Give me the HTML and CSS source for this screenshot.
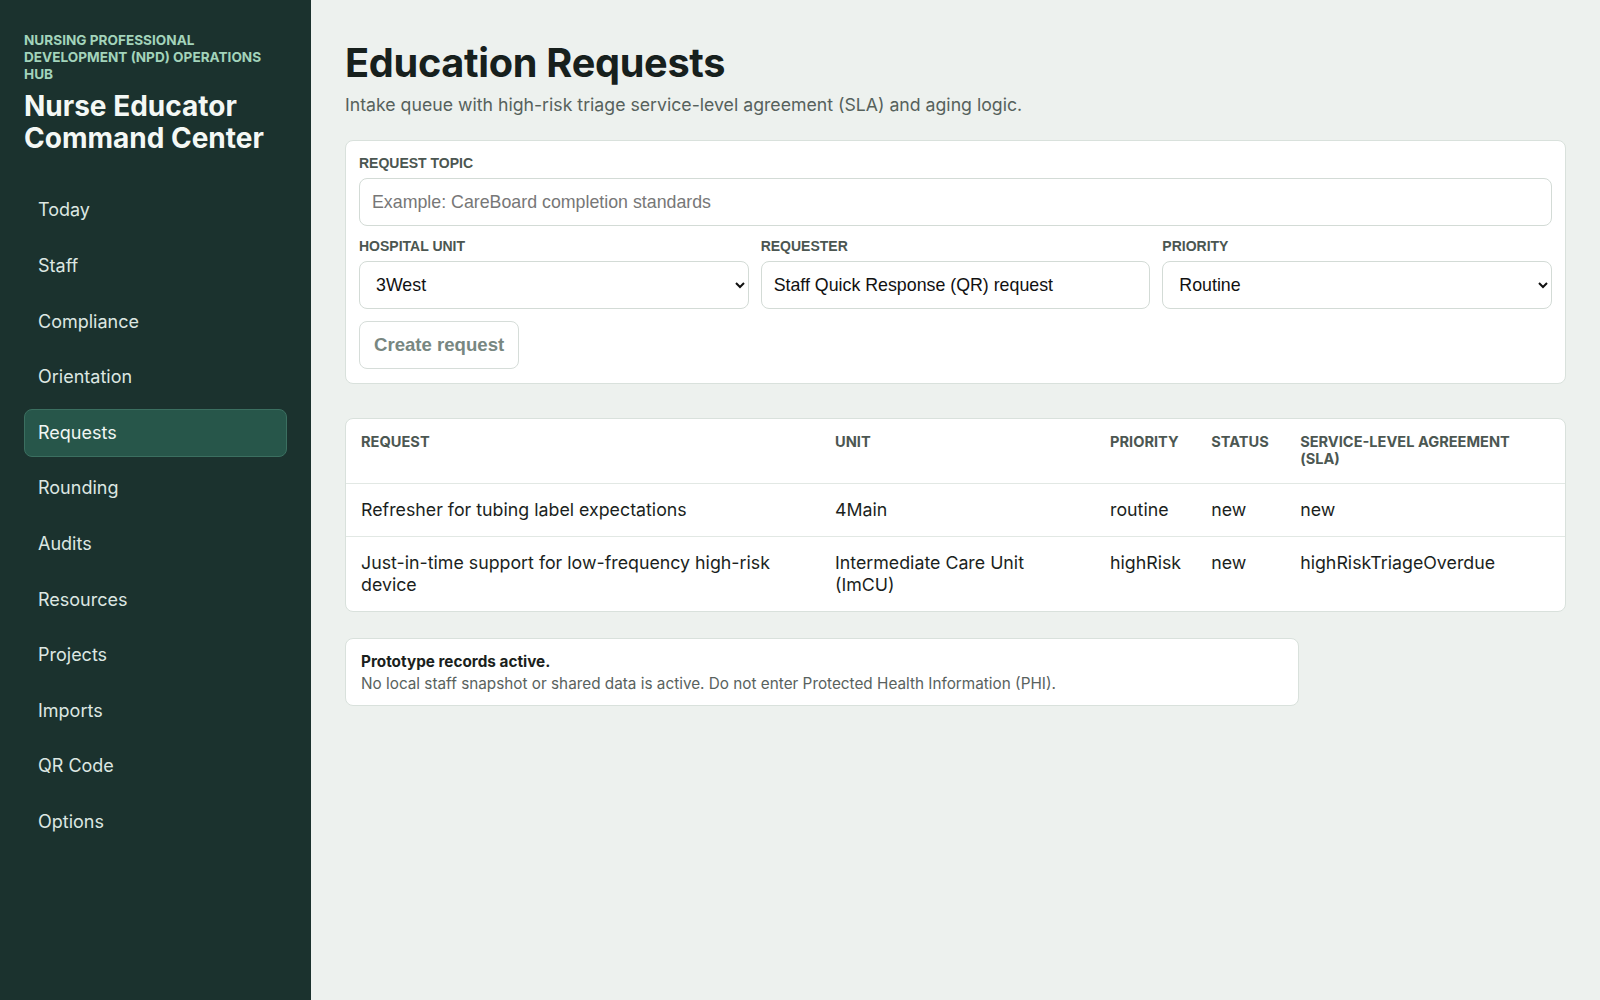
FILE: index.html
```html
<!DOCTYPE html>
<html lang="en">
<head>
<meta charset="UTF-8">
<meta name="viewport" content="width=device-width, initial-scale=1.0">
<title>Education Requests</title>
<link rel="stylesheet" href="styles.css">
</head>
<body>
<div class="app">
  <aside class="sidebar">
    <div class="eyebrow">Nursing Professional Development (NPD) Operations Hub</div>
    <div class="brand">Nurse Educator Command Center</div>
    <nav class="nav">
      <a href="#">Today</a>
      <a href="#">Staff</a>
      <a href="#">Compliance</a>
      <a href="#">Orientation</a>
      <a href="#" class="active">Requests</a>
      <a href="#">Rounding</a>
      <a href="#">Audits</a>
      <a href="#">Resources</a>
      <a href="#">Projects</a>
      <a href="#">Imports</a>
      <a href="#">QR Code</a>
      <a href="#">Options</a>
    </nav>
  </aside>

  <main class="main">
    <h1>Education Requests</h1>
    <p class="lead">Intake queue with high-risk triage service-level agreement (SLA) and aging logic.</p>

    <section class="card form-card">
      <div class="field">
        <label for="topic">Request topic</label>
        <input type="text" id="topic" placeholder="Example: CareBoard completion standards">
      </div>
      <div class="form-row">
        <div class="field">
          <label for="unit">Hospital unit</label>
          <select id="unit">
            <option>3West</option>
            <option>4Main</option>
            <option>Intermediate Care Unit (ImCU)</option>
          </select>
        </div>
        <div class="field">
          <label for="requester">Requester</label>
          <input type="text" id="requester" value="Staff Quick Response (QR) request">
        </div>
        <div class="field">
          <label for="priority">Priority</label>
          <select id="priority">
            <option>Routine</option>
            <option>High risk</option>
          </select>
        </div>
      </div>
      <button class="btn" disabled>Create request</button>
    </section>

    <section class="card table-card">
      <table>
        <thead>
          <tr>
            <th class="col-request">Request</th>
            <th class="col-unit">Unit</th>
            <th class="col-priority">Priority</th>
            <th class="col-status">Status</th>
            <th>Service-level agreement (SLA)</th>
          </tr>
        </thead>
        <tbody>
          <tr>
            <td>Refresher for tubing label expectations</td>
            <td>4Main</td>
            <td>routine</td>
            <td>new</td>
            <td>new</td>
          </tr>
          <tr>
            <td>Just-in-time support for low-frequency high-risk device</td>
            <td>Intermediate Care Unit (ImCU)</td>
            <td>highRisk</td>
            <td>new</td>
            <td>highRiskTriageOverdue</td>
          </tr>
        </tbody>
      </table>
    </section>

    <section class="card notice">
      <strong>Prototype records active.</strong>
      <p>No local staff snapshot or shared data is active. Do not enter Protected Health Information (PHI).</p>
    </section>
  </main>
</div>
</body>
</html>
```

FILE: styles.css
```css
* {
  box-sizing: border-box;
}
body {
  margin: 0;
  font-family: Inter, "Noto Sans", sans-serif;
  background-color: #edf1ee;
  color: #1b1f1d;
}
.app {
  display: flex;
  min-height: 1000px;
}

/* sidebar */
.sidebar {
  width: 311px;
  flex-shrink: 0;
  background-color: #1b322e;
  padding: 32px 24px 24px 24px;
}
.eyebrow {
  font-size: 13.6px;
  font-weight: 700;
  line-height: 16.8px;
  text-transform: uppercase;
  color: #a3d4bb;
}
.brand {
  margin-top: 8px;
  font-size: 28px;
  font-weight: 700;
  line-height: 32px;
  color: #f4f8f5;
}
.nav {
  display: flex;
  flex-direction: column;
  gap: 7.6px;
  margin-top: 32px;
}
.nav a {
  display: block;
  height: 48px;
  line-height: 46px;
  padding: 0 13px;
  border: 1px solid transparent;
  border-radius: 8px;
  font-size: 18px;
  color: #dde7e2;
  text-decoration: none;
}
.nav a.active {
  background-color: #27564a;
  border-color: #3b6f60;
  color: #f1f6f3;
}

/* main */
.main {
  flex: 1;
  padding: 38px 34px 34px 34px;
}
h1 {
  margin: 0;
  font-size: 39.7px;
  font-weight: 700;
  line-height: 50px;
  letter-spacing: -0.3px;
  color: #17201d;
}
.lead {
  margin: 6px 0 25px 0;
  font-size: 17.7px;
  color: #56615c;
}
.card {
  background-color: #fff;
  border: 1px solid #d9e1dc;
  border-radius: 8px;
}
.form-card {
  padding: 14px 13px 14px 13px;
}
.field {
  display: flex;
  flex-direction: column;
}
.field label {
  font-family: "Liberation Sans", Arial, sans-serif;
  font-size: 14px;
  font-weight: 700;
  text-transform: uppercase;
  color: #4b5651;
  margin-bottom: 7px;
}
.field input,
.field select {
  height: 48px;
  padding: 0 12px;
  border: 1px solid #d3dbd6;
  border-radius: 8px;
  background-color: #fff;
  font-family: "Liberation Sans", Arial, sans-serif;
  font-size: 17.8px;
  color: #111;
}
.field input::placeholder {
  color: #777;
}
.form-row {
  display: grid;
  grid-template-columns: 1fr 1fr 1fr;
  gap: 12px;
  margin-top: 12px;
}
.btn {
  margin-top: 12px;
  height: 48px;
  padding: 0 14px;
  border: 1px solid #d6ddd9;
  border-radius: 8px;
  background-color: #fff;
  font-family: "Liberation Sans", Arial, sans-serif;
  font-size: 18.6px;
  font-weight: 700;
  color: #788781;
}

/* table */
.table-card {
  margin-top: 34px;
  overflow: hidden;
}
table {
  width: 100%;
  border-collapse: collapse;
}
th {
  text-align: left;
  vertical-align: top;
  padding: 15px 15px 15px 15px;
  height: 64px;
  font-size: 14.6px;
  font-weight: 700;
  line-height: 17px;
  text-transform: uppercase;
  color: #4c5752;
}
td {
  vertical-align: top;
  padding: 15px 15px;
  font-size: 17.8px;
  line-height: 22px;
  color: #1b1f1d;
  border-top: 1px solid #e2e8e4;
}
.col-request {
  width: 474px;
}
.col-unit {
  width: 275px;
}
.col-priority {
  width: 101px;
}
.col-status {
  width: 89px;
}

/* notice */
.notice {
  margin-top: 26px;
  width: 954px;
  padding: 13px 15px 12px 15px;
}
.notice strong {
  display: block;
  font-size: 15.3px;
  color: #1b1f1d;
}
.notice p {
  margin: 3px 0 0 0;
  font-size: 15.3px;
  color: #59625e;
}
```
